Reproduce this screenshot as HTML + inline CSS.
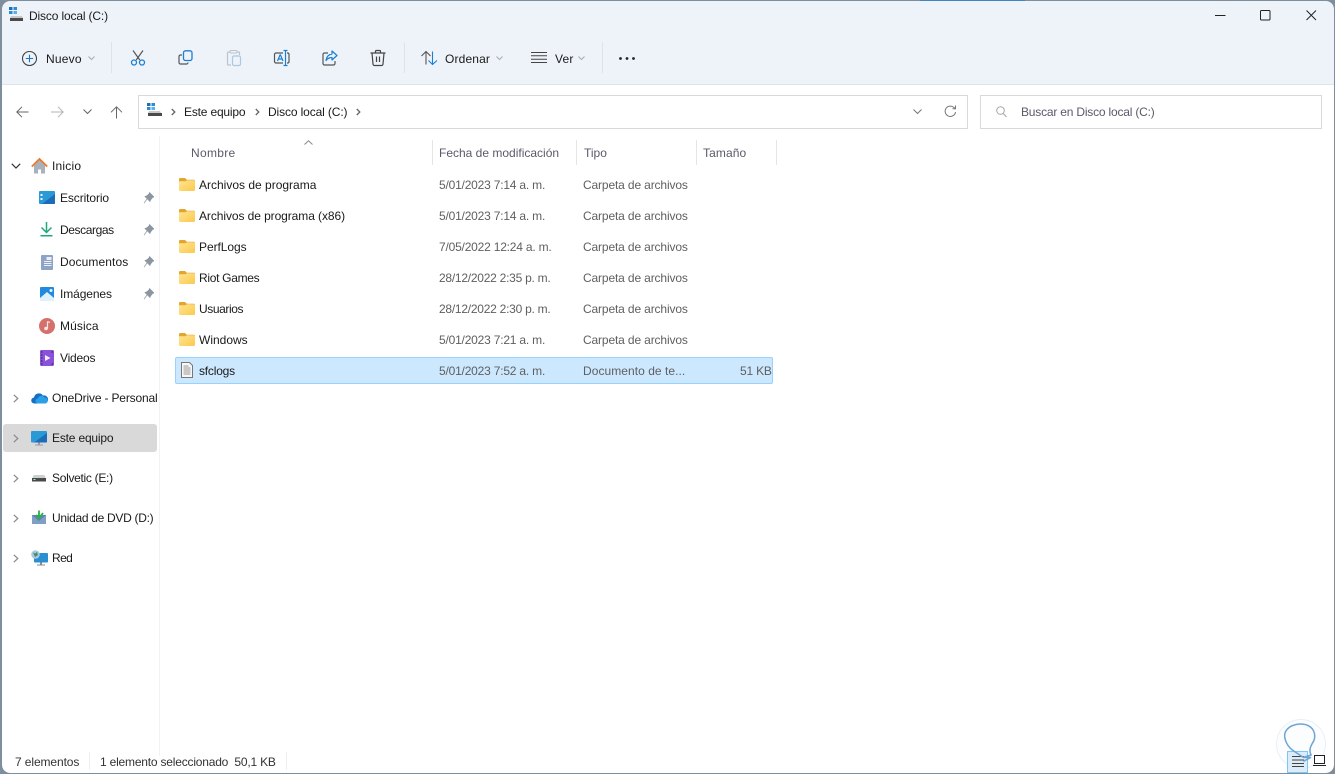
<!DOCTYPE html>
<html lang="es"><head><meta charset="utf-8"><title>Disco local (C:)</title>
<style>
html,body{margin:0;padding:0;width:1335px;height:774px;overflow:hidden;background:#7e8e9c}
body{position:relative;font-family:"Liberation Sans",sans-serif;font-size:12px;color:#1a1a1a}
#bg{position:absolute;left:2px;top:1px;width:1332px;height:772px;background:#fff;border-radius:8px;overflow:hidden}
#tb{position:absolute;left:0;top:0;width:100%;height:83px;background:#eef3fa;border-bottom:1px solid #dfe2e6}
.t{position:absolute;white-space:nowrap;line-height:16px;font-size:12px}
.g{color:#5f5f5f}.h{color:#5a5a6a}
.d{letter-spacing:-.2px}.c{letter-spacing:-.14px}
svg{position:absolute;overflow:visible}
.sep{position:absolute;width:1px;background:#dfe3e8}
.hs{position:absolute;width:1px;top:140px;height:25px;background:#e5e5e5}
.box{position:absolute;background:#fff;border:1px solid #d9d9d9;box-sizing:border-box}
</style></head><body>
<svg width="0" height="0" style="left:0;top:0"><defs>
<linearGradient id="fg" x1="0" y1="0" x2="1" y2="1"><stop offset="0" stop-color="#ffe594"/><stop offset="1" stop-color="#fbc94c"/></linearGradient>
<symbol id="folder" viewBox="0 0 16 13"><path d="M0 1.200A1.200 1.200 0 0 1 1.200 0H6l1.800 1.800h7A1.200 1.200 0 0 1 16 3v2H0z" fill="#e3a52c"/><path d="M0 3.200h6.500l1.500-1h6.800A1.200 1.200 0 0 1 16 3.400v8.400A1.200 1.200 0 0 1 14.800 13H1.200A1.200 1.200 0 0 1 0 11.800z" fill="url(#fg)"/></symbol>
<symbol id="pin" viewBox="0 0 11 12"><path d="M6.500.5L11 5l-1.500.5L7.500 8 7 9.500 2 4.500 3.500 4 6 2zM4 7L1 11.200" fill="#8d96a0" stroke="#8d96a0" stroke-width=".7"/></symbol>
<symbol id="chev" viewBox="0 0 6 9"><path d="M.8.800L4.800 4.500.8 8.200" stroke="#8a8a8a" fill="none" stroke-width="1.200"/></symbol>
<symbol id="bc" viewBox="0 0 5 8"><path d="M.8 1L3.800 4 .8 7" stroke="#666" fill="none" stroke-width="1.300"/></symbol>
</defs></svg>
<div style="position:absolute;left:920px;top:0;width:105px;height:1px;background:#3f86bd"></div>
<div id="bg"><div id="tb"></div></div>

<!-- title -->
<svg style="left:9px;top:7px" width="16" height="14" viewBox="0 0 16 14"><rect x="0" y="0" width="3.500" height="3" fill="#1c6fb5"/><rect x="4.500" y="0" width="3.500" height="3" fill="#2b8bd6"/><rect x="0" y="4" width="3.500" height="3" fill="#2b8bd6"/><rect x="4.500" y="4" width="3.500" height="3" fill="#5ab0e8"/><path d="M2 9h11l1 2H1z" fill="#c9c9c9"/><rect x="1" y="11" width="13" height="3" fill="#4a4a4a"/></svg>
<div class="t" style="left:29px;top:8px;letter-spacing:-.15px">Disco local (C:)</div>

<!-- window controls -->
<svg style="left:1215px;top:9px" width="12" height="12"><path d="M0 6.500h10.500" stroke="#222" stroke-width="1"/></svg>
<svg style="left:1260px;top:10px" width="11" height="11"><rect x=".5" y=".5" width="9.500" height="9.500" rx="1" fill="none" stroke="#222"/></svg>
<svg style="left:1306px;top:10px" width="11" height="11"><path d="M.5.500l9.500 9.500M10 .500L.5 10" stroke="#222" fill="none"/></svg>

<!-- toolbar -->
<svg style="left:22px;top:51px" width="15" height="15"><circle cx="7.500" cy="7.500" r="7" fill="none" stroke="#444" stroke-width="1.100"/><path d="M7.500 3.800v7.400M3.800 7.500h7.400" stroke="#1b76c9" stroke-width="1.100"/></svg>
<div class="t" style="left:46px;top:51px;letter-spacing:.2px">Nuevo</div>
<svg style="left:88px;top:56px" width="7" height="5"><path d="M.5.500L3.500 3.500 6.500.500" stroke="#aaa" fill="none"/></svg>
<div class="sep" style="left:111px;top:42px;height:31px"></div>
<svg style="left:130px;top:50px" width="16" height="16" viewBox="0 0 16 16"><path d="M3 .5L9.800 10M13 .5L6.200 10" stroke="#555" fill="none" stroke-width="1.200"/><circle cx="4" cy="12.500" r="2.500" fill="none" stroke="#1b7fd4" stroke-width="1.300"/><circle cx="12" cy="12.500" r="2.500" fill="none" stroke="#1b7fd4" stroke-width="1.300"/></svg>
<svg style="left:178px;top:50px" width="16" height="16" viewBox="0 0 16 16"><path d="M4 5H2.500A1.500 1.500 0 0 0 1 6.500v6A1.500 1.500 0 0 0 2.500 14h6A1.500 1.500 0 0 0 10 12.500" fill="none" stroke="#555" stroke-width="1.200"/><rect x="5.500" y=".8" width="8.500" height="9.700" rx="2" fill="#eef3fa" stroke="#1b7fd4" stroke-width="1.300"/></svg>
<svg style="left:226px;top:50px" width="16" height="16" viewBox="0 0 16 16"><path d="M4 2H2.500A1 1 0 0 0 1.500 3v11a1 1 0 0 0 1 1H5M11 2h1.500a1 1 0 0 1 1 1v2" fill="none" stroke="#bcc3ca" stroke-width="1.200"/><rect x="4" y=".5" width="7" height="2.500" rx="1" fill="#eef3fa" stroke="#bcc3ca"/><rect x="6.500" y="6" width="8" height="9.500" rx="1.500" fill="#eef3fa" stroke="#a9c8e3" stroke-width="1.200"/></svg>
<svg style="left:274px;top:50px" width="16" height="16" viewBox="0 0 16 16"><path d="M9 3H2A1.500 1.500 0 0 0 .5 4.500v7A1.500 1.500 0 0 0 2 13h7M13 3h1a1.500 1.500 0 0 1 1 1.500v7a1.500 1.500 0 0 1-1 1.500h-1" fill="none" stroke="#555" stroke-width="1.200"/><path d="M3.500 11L6 5h.5L9 11M4.500 9h3.500" fill="none" stroke="#1b7fd4" stroke-width="1.200"/><path d="M9.500.5h4M11.500.5v15M9.500 15.500h4" fill="none" stroke="#1b7fd4" stroke-width="1.200"/></svg>
<svg style="left:322px;top:50px" width="16" height="16" viewBox="0 0 16 16"><path d="M6 3H2.500A1.500 1.500 0 0 0 1 4.500v9A1.500 1.500 0 0 0 2.500 15h9a1.500 1.500 0 0 0 1.500-1.500V11" fill="none" stroke="#555" stroke-width="1.200"/><path d="M10 1l5 4.500L10 10V7.500c-3 0-4.500 1-6 3 .5-3.500 2.500-6 6-6.500z" fill="#eef3fa" stroke="#1b7fd4" stroke-linejoin="round" stroke-width="1.200"/></svg>
<svg style="left:370px;top:50px" width="16" height="16" viewBox="0 0 16 16"><path d="M.5 3h15M5.500 3V1.500A1 1 0 0 1 6.500.5h3a1 1 0 0 1 1 1V3M2 3l1 11a1.500 1.500 0 0 0 1.500 1.500h7A1.500 1.500 0 0 0 13 14l1-11M6.500 6.500v5.500M9.500 6.500v5.500" fill="none" stroke="#444" stroke-width="1.200"/></svg>
<div class="sep" style="left:404px;top:42px;height:31px"></div>
<svg style="left:421px;top:51px" width="17" height="14" viewBox="0 0 17 14"><path d="M5 13.500V.5M.5 5L5 .5 9.500 5" fill="none" stroke="#555" stroke-width="1.100"/><path d="M11.500.5v13M7.500 9.500l4 4 4.500-4" fill="none" stroke="#1b7fd4" stroke-width="1.100"/></svg>
<div class="t" style="left:445px;top:51px;letter-spacing:.15px">Ordenar</div>
<svg style="left:496px;top:56px" width="7" height="5"><path d="M.5.500L3.500 3.500 6.500.500" stroke="#aaa" fill="none"/></svg>
<svg style="left:531px;top:52px" width="16" height="12"><path d="M0 .5h16M0 3.800h16M0 7.200h16M0 10.500h16" stroke="#444" fill="none"/></svg>
<div class="t" style="left:555px;top:51px;letter-spacing:.2px">Ver</div>
<svg style="left:578px;top:56px" width="7" height="5"><path d="M.5.500L3.500 3.500 6.500.500" stroke="#aaa" fill="none"/></svg>
<div class="sep" style="left:602px;top:42px;height:31px"></div>
<svg style="left:619px;top:57px" width="17" height="3"><circle cx="1.500" cy="1.500" r="1.400" fill="#222"/><circle cx="8" cy="1.500" r="1.400" fill="#222"/><circle cx="14.500" cy="1.500" r="1.400" fill="#222"/></svg>

<!-- nav -->
<svg style="left:16px;top:106px" width="13" height="12"><path d="M12.500 6H.8M6 .8L.8 6 6 11.200" stroke="#666" fill="none" stroke-width="1"/></svg>
<svg style="left:51px;top:106px" width="13" height="12"><path d="M0 6h11.700M7 .8L12.200 6 7 11.200" stroke="#b4b4b4" fill="none"/></svg>
<svg style="left:83px;top:109px" width="9" height="6"><path d="M.5.500L4.500 4.500 8.500.500" stroke="#666" fill="none"/></svg>
<svg style="left:110px;top:106px" width="13" height="13"><path d="M6.500 12.500V.8M1 6.300L6.500.8 12 6.300" stroke="#666" fill="none"/></svg>

<!-- address -->
<div class="box" style="left:138px;top:95px;width:830px;height:34px"></div>
<svg style="left:147px;top:103px" width="16" height="13" viewBox="0 0 16 13"><rect x="0" y="0" width="3.500" height="3" fill="#1c6fb5"/><rect x="4.500" y="0" width="3.500" height="3" fill="#2b8bd6"/><rect x="0" y="4" width="3.500" height="3" fill="#2b8bd6"/><rect x="4.500" y="4" width="3.500" height="3" fill="#5ab0e8"/><path d="M2 8h11l1 2H1z" fill="#c9c9c9"/><rect x="1" y="10" width="14" height="3" fill="#4a4a4a"/></svg>
<svg style="left:171px;top:108px" width="5" height="8"><use href="#bc"/></svg>
<div class="t" style="left:184px;top:104px;letter-spacing:-.18px">Este equipo</div>
<svg style="left:255px;top:108px" width="5" height="8"><use href="#bc"/></svg>
<div class="t" style="left:268px;top:104px;letter-spacing:-.12px">Disco local (C:)</div>
<svg style="left:356px;top:108px" width="5" height="8"><use href="#bc"/></svg>
<svg style="left:913px;top:109px" width="9" height="6"><path d="M.5.500L4.500 4.500 8.500.500" stroke="#777" fill="none"/></svg>
<svg style="left:944px;top:105px" width="13" height="13" viewBox="0 0 13 13"><path d="M11.500 7A5.200 5.200 0 1 1 9.800 2.400L11.500 3.500M11.500.5v3.200H8.500" fill="none" stroke="#777"/></svg>

<!-- search -->
<div class="box" style="left:980px;top:95px;width:342px;height:34px"></div>
<svg style="left:996px;top:106px" width="11" height="12"><circle cx="4.500" cy="4.500" r="3.800" fill="none" stroke="#a5a5a5"/><path d="M7.300 7.500L10.500 11" stroke="#a5a5a5" fill="none"/></svg>
<div class="t h" style="left:1021px;top:104px;letter-spacing:-.2px">Buscar en Disco local (C:)</div>

<!-- sidebar -->
<div style="position:absolute;left:159px;top:136px;width:1px;height:620px;background:#f2f2f2"></div>
<div style="position:absolute;left:3px;top:424px;width:154px;height:28px;background:#d9d9d9;border-radius:3px"></div>

<svg style="left:11px;top:163px" width="10" height="6"><path d="M.8.800L5 5 9.200.800" stroke="#333" fill="none" stroke-width="1.200"/></svg>
<svg style="left:31px;top:158px" width="17" height="16" viewBox="0 0 17 16"><path d="M3 7.500v8h4v-4h3v4h4v-8L8.500 2z" fill="#a9b2bb"/><path d="M.8 8.500L8.500 1l7.700 7.500" fill="none" stroke="#e8772e" stroke-width="1.800"/></svg>
<div class="t" style="left:52px;top:158px;letter-spacing:.2px">Inicio</div>

<svg style="left:39px;top:191px" width="16" height="13"><rect width="16" height="13" rx="1" fill="#2a9ad6"/><path d="M16 3v9a1 1 0 0 1-1 1H3z" fill="#1c6cb8"/><rect x="1.500" y="3" width="2" height="2" fill="#e8f6ff"/><rect x="1.500" y="7" width="2" height="2" fill="#e8f6ff"/></svg>
<div class="t" style="left:60px;top:190px;letter-spacing:-.1px">Escritorio</div>
<svg style="left:143px;top:192px" width="11" height="12"><use href="#pin"/></svg>

<svg style="left:40px;top:222px" width="13" height="15" viewBox="0 0 13 15"><path d="M6.500 0v10M1.500 5.500l5 5 5-5" fill="none" stroke="#21a77d" stroke-width="1.500"/><rect x="0.500" y="13" width="12" height="1.500" fill="#21a77d"/></svg>
<div class="t" style="left:60px;top:222px;letter-spacing:-.4px">Descargas</div>
<svg style="left:143px;top:224px" width="11" height="12"><use href="#pin"/></svg>

<svg style="left:41px;top:255px" width="12" height="15"><rect width="12" height="15" rx="1" fill="#8da4c4"/><rect x="5.500" y="2" width="5" height="3" fill="#eef"/><path d="M3 6.500h7.500M3 8.500h7.500M3 10.500h7.500" stroke="#eef" stroke-width="1"/></svg>
<div class="t" style="left:60px;top:254px;letter-spacing:.1px">Documentos</div>
<svg style="left:143px;top:256px" width="11" height="12"><use href="#pin"/></svg>

<svg style="left:40px;top:287px" width="14" height="14"><rect width="14" height="14" rx="1" fill="#1f8ae0"/><path d="M0 11l7-6 7 6v3H0z" fill="#dff1ff"/><circle cx="11" cy="3.500" r="1.500" fill="#eaf6ff"/></svg>
<div class="t" style="left:60px;top:286px;letter-spacing:-.1px">Imágenes</div>
<svg style="left:143px;top:288px" width="11" height="12"><use href="#pin"/></svg>

<svg style="left:39px;top:318px" width="16" height="16"><circle cx="8" cy="8" r="8" fill="#d6706a"/><path d="M8.500 3.500v7" stroke="#f5e8e6" stroke-width="1.200"/><circle cx="7" cy="10.500" r="1.800" fill="#f5e8e6"/><path d="M8.500 3.500l2.500 1" stroke="#f5e8e6" stroke-width="1.200"/></svg>
<div class="t" style="left:60px;top:318px;letter-spacing:.1px">Música</div>

<svg style="left:40px;top:350px" width="14" height="16"><rect width="14" height="16" rx="1.500" fill="#8a52d8"/><path d="M5 5l5.500 3L5 11z" fill="#f2ecff"/><path d="M1 2h1.500M1 5h1.500M1 8h1.500M1 11h1.500M1 14h1.500M11.500 2H13M11.500 14H13" stroke="#2a1a55" stroke-width="1"/></svg>
<div class="t" style="left:60px;top:350px;letter-spacing:-.2px">Videos</div>

<svg style="left:13px;top:394px" width="6" height="9"><use href="#chev"/></svg>
<svg style="left:31px;top:392px" width="17" height="12" viewBox="0 0 17 12"><path d="M3.500 11.500A3 3 0 0 1 3 5.500 5 5 0 0 1 12 3.500 4 4 0 0 1 14 11.500z" fill="#1570c4"/><path d="M7 11.500a2.500 2.500 0 0 1 0-5 3.500 3.500 0 0 1 6.500-1A3 3 0 0 1 14 11.500z" fill="#2ba0e6"/></svg>
<div class="t" style="left:52px;top:390px;letter-spacing:-.17px">OneDrive - Personal</div>

<svg style="left:13px;top:434px" width="6" height="9"><use href="#chev"/></svg>
<svg style="left:31px;top:431px" width="16" height="15" viewBox="0 0 16 15"><rect width="16" height="11.500" rx="1" fill="#2a9ad6"/><path d="M16 2v8.500a1 1 0 0 1-1 1H3z" fill="#1c6cb8"/><rect x="7" y="11.500" width="2" height="2" fill="#99a"/><rect x="4" y="13.500" width="8" height="1" fill="#99a"/></svg>
<div class="t" style="left:52px;top:430px;letter-spacing:-.18px">Este equipo</div>

<svg style="left:13px;top:474px" width="6" height="9"><use href="#chev"/></svg>
<svg style="left:32px;top:475px" width="14" height="7"><path d="M1.500 0h11l1 3H.5z" fill="#cfcfcf"/><rect y="3" width="14" height="3.500" fill="#4a4a4a"/><rect x="1.500" y="4" width="2" height="1" fill="#9ec"/></svg>
<div class="t" style="left:52px;top:470px;letter-spacing:-.3px">Solvetic (E:)</div>

<svg style="left:13px;top:514px" width="6" height="9"><use href="#chev"/></svg>
<svg style="left:32px;top:510px" width="14" height="14" viewBox="0 0 14 14"><path d="M0 5h14v9H0z" fill="#7f9fc4"/><path d="M0 5l7 6 7-6" fill="#5f83ad"/><path d="M7 .5v7M4 5l3 3 4-5" fill="none" stroke="#28b04a" stroke-width="1.800"/></svg>
<div class="t" style="left:52px;top:510px;letter-spacing:-.3px">Unidad de DVD (D:)</div>

<svg style="left:13px;top:554px" width="6" height="9"><use href="#chev"/></svg>
<svg style="left:31px;top:550px" width="17" height="16" viewBox="0 0 17 16"><rect x="3" y="3" width="14" height="9.500" rx="1" fill="#2a8fd0"/><rect x="9" y="12.500" width="2" height="2" fill="#889"/><rect x="6" y="14.500" width="8" height="1" fill="#889"/><circle cx="4.500" cy="4.500" r="4.300" fill="#a8c8e4"/><path d="M2 2.500l2 1 2-1.500 1 3-3 2z" fill="#4f8f5f"/></svg>
<div class="t" style="left:52px;top:550px;letter-spacing:-.6px">Red</div>

<!-- column headers -->
<svg style="left:304px;top:140px" width="9" height="5"><path d="M.5 4.500L4.500.8l4 3.700" stroke="#888" fill="none"/></svg>
<div class="t h" style="left:191px;top:145px;letter-spacing:.3px">Nombre</div>
<div class="hs" style="left:432px"></div>
<div class="t h" style="left:439px;top:145px">Fecha de modificación</div>
<div class="hs" style="left:576px"></div>
<div class="t h" style="left:584px;top:145px">Tipo</div>
<div class="hs" style="left:696px"></div>
<div class="t h" style="left:703px;top:145px;letter-spacing:.1px">Tamaño</div>
<div class="hs" style="left:776px"></div>

<!-- selected -->
<div style="position:absolute;left:175px;top:357px;width:598px;height:27px;box-sizing:border-box;background:#cce8ff;border:1px solid #99d1ff;border-radius:2px"></div>

<!-- rows -->
<svg style="left:179px;top:178px" width="16" height="13"><use href="#folder"/></svg>
<div class="t" style="left:199px;top:177px">Archivos de programa</div>
<div class="t g d" style="left:439px;top:177px">5/01/2023 7:14 a. m.</div>
<div class="t g c" style="left:583px;top:177px">Carpeta de archivos</div>

<svg style="left:179px;top:209px" width="16" height="13"><use href="#folder"/></svg>
<div class="t" style="left:199px;top:208px;letter-spacing:-.08px">Archivos de programa (x86)</div>
<div class="t g d" style="left:439px;top:208px">5/01/2023 7:14 a. m.</div>
<div class="t g c" style="left:583px;top:208px">Carpeta de archivos</div>

<svg style="left:179px;top:240px" width="16" height="13"><use href="#folder"/></svg>
<div class="t" style="left:199px;top:239px;letter-spacing:-.05px">PerfLogs</div>
<div class="t g d" style="left:439px;top:239px">7/05/2022 12:24 a. m.</div>
<div class="t g c" style="left:583px;top:239px">Carpeta de archivos</div>

<svg style="left:179px;top:271px" width="16" height="13"><use href="#folder"/></svg>
<div class="t" style="left:199px;top:270px;letter-spacing:-.3px">Riot Games</div>
<div class="t g" style="left:439px;top:270px;letter-spacing:-.25px">28/12/2022 2:35 p. m.</div>
<div class="t g c" style="left:583px;top:270px">Carpeta de archivos</div>

<svg style="left:179px;top:302px" width="16" height="13"><use href="#folder"/></svg>
<div class="t" style="left:199px;top:301px;letter-spacing:-.4px">Usuarios</div>
<div class="t g" style="left:439px;top:301px;letter-spacing:-.25px">28/12/2022 2:30 p. m.</div>
<div class="t g c" style="left:583px;top:301px">Carpeta de archivos</div>

<svg style="left:179px;top:333px" width="16" height="13"><use href="#folder"/></svg>
<div class="t" style="left:199px;top:332px">Windows</div>
<div class="t g d" style="left:439px;top:332px">5/01/2023 7:21 a. m.</div>
<div class="t g c" style="left:583px;top:332px">Carpeta de archivos</div>

<svg style="left:181px;top:362px" width="12" height="16" viewBox="0 0 12 16"><path d="M.5.500h8l3 3v12H.500z" fill="#f7f7f7" stroke="#777"/><path d="M2.500 4h5M2.500 6h7M2.500 8h7M2.500 10h7M2.500 12h7" stroke="#999" stroke-width="1"/></svg>
<div class="t" style="left:199px;top:363px;letter-spacing:-.2px">sfclogs</div>
<div class="t g d" style="left:439px;top:363px">5/01/2023 7:52 a. m.</div>
<div class="t g" style="left:583px;top:363px;letter-spacing:.05px">Documento de te...</div>
<div class="t g" style="left:740px;top:363px;letter-spacing:-.2px">51 KB</div>

<!-- status bar -->
<div class="t" style="left:15px;top:754px;color:#333;letter-spacing:-.1px">7 elementos</div>
<div class="t" style="left:100px;top:754px;color:#333;letter-spacing:-.2px">1 elemento seleccionado&nbsp; 50,1 KB</div>
<div class="sep" style="left:89px;top:752px;height:18px;background:#f0f0f0"></div>
<div class="sep" style="left:286px;top:752px;height:18px;background:#f0f0f0"></div>

<!-- watermark + view toggles -->
<svg style="left:1275px;top:718px" width="50" height="50"><circle cx="26" cy="26" r="24.500" fill="#fcfdfe" stroke="#e8f0f7" stroke-width="1"/></svg>
<div style="position:absolute;left:1287px;top:751px;width:21px;height:22px;box-sizing:border-box;background:#dcecf9;border:1px solid #7cc8f5"></div>
<svg style="left:1292px;top:756px" width="13" height="12"><path d="M0 .5h12M0 4h12M0 7.500h12M0 10.500h12" stroke="#444" fill="none"/></svg>
<svg style="left:1313px;top:755px" width="13" height="12"><rect x="1.500" y=".5" width="10" height="8" fill="#fff" stroke="#222"/><path d="M0 10.500h13" stroke="#222"/></svg>
<svg style="left:1235px;top:694px" width="100" height="80" viewBox="0 0 300 240"><path d="M205 190L172 168C150 150 145 125 152 112C165 90 200 85 220 95C240 105 245 130 232 148C225 160 222 170 228 183L205 190L228 190L205 202" fill="none" stroke="#6da5d6" stroke-width="4.500"/></svg>

<!-- corners -->
<svg style="left:0;top:0" width="1335" height="774"><path d="M0 0h1335v774H0zM2 9v756a8 8 0 0 0 8 8h1316a8 8 0 0 0 8-8V9a8 8 0 0 0-8-8H10a8 8 0 0 0-8 8z" fill="#7e8e9c" fill-rule="evenodd"/><path d="M920 .5h105" stroke="#3f86bd"/></svg>
</body></html>
